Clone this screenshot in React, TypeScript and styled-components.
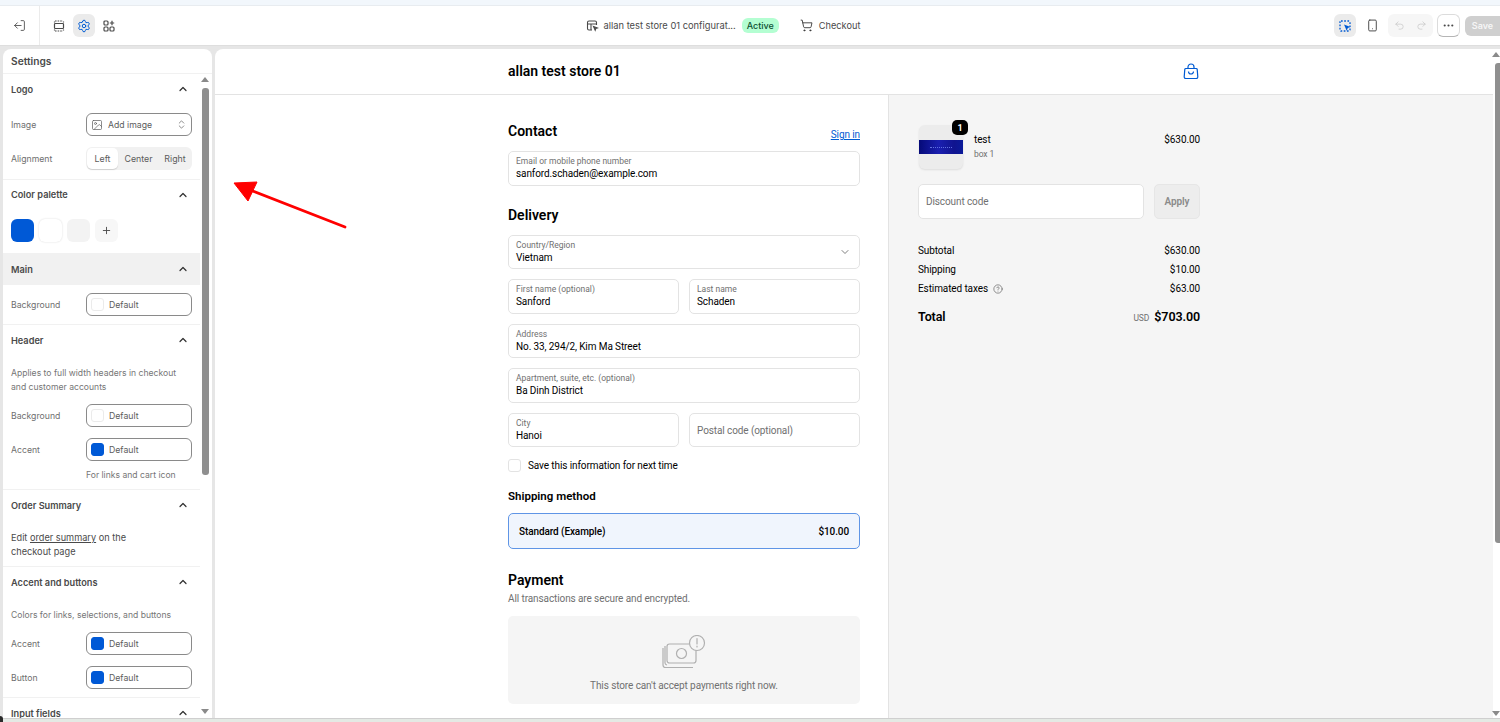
import React from 'react';
import styled, { createGlobalStyle } from 'styled-components';
import {
  ChevronDown,
  ChevronUp,
  ChevronsUpDown,
  CircleHelp,
  Ellipsis,
  ImageIcon,
  LogOut,
  Plus,
  Redo2,
  Settings,
  ShoppingCart,
  Smartphone,
  Undo2,
} from 'lucide-react';

const GlobalStyle = createGlobalStyle`
  html, body {
    margin: 0;
    padding: 0;
    height: 722px;
    overflow: hidden;
    background: #e6e6e6;
    font-family: Inter, "Liberation Sans", sans-serif;
  }
  * { box-sizing: border-box; }
`;

const Page = styled.div`
  position: relative;
  width: 1500px;
  height: 722px;
  display: flex;
  flex-direction: column;
  overflow: hidden;
`;

const TopStrip = styled.div`
  height: 6px;
  flex: none;
  background: #f2f7fc;
  border-bottom: 1px solid #e8ecf0;
`;

const TopBar = styled.header`
  height: 39px;
  flex: none;
  background: #fff;
  display: flex;
  align-items: center;
  justify-content: space-between;
`;

const BarGroup = styled.div`
  display: flex;
  align-items: center;
  height: 100%;
`;

const ExitCell = styled.div`
  width: 40px;
  height: 100%;
  padding-right: 1px;
  display: flex;
  align-items: center;
  justify-content: center;
  border-right: 1px solid #ebebeb;
  color: #4a4a4a;
`;

const NavIcons = styled.div`
  display: flex;
  align-items: center;
  gap: 3px;
  padding-left: 8px;
  margin-right: -8px;
`;

const IconButton = styled.div<{ $active?: boolean; $accent?: boolean; $gap?: number }>`
  width: 22px;
  height: 23px;
  margin-left: ${(p) => p.$gap ?? 0}px;
  border-radius: 6px;
  display: flex;
  align-items: center;
  justify-content: center;
  color: ${(p) => (p.$accent ? '#005bd3' : '#4a4a4a')};
  background: ${(p) => (p.$active ? '#ebebeb' : 'transparent')};
`;

const ConfigName = styled.span`
  margin-left: 5px;
  font-size: 9.3px;
  color: #4a4a4a;
`;

const ActivePill = styled.span`
  margin-left: 6px;
  height: 15px;
  padding: 0 5px;
  border-radius: 6px;
  display: flex;
  align-items: center;
  background: #b4fed2;
  color: #0c5132;
  font-size: 9px;
  font-weight: 500;
`;

const CheckoutLabel = styled.span`
  margin-left: 6px;
  font-size: 9.2px;
  color: #4a4a4a;
`;

const CartWrap = styled.span`
  margin-left: 21px;
  display: flex;
  color: #303030;
`;

const UndoGroup = styled.div`
  margin-left: 5px;
  width: 45px;
  height: 23px;
  border-radius: 6px;
  background: #f6f6f6;
  display: flex;
  align-items: center;
  justify-content: space-around;
  color: #c4c4c4;
`;

const MoreButton = styled.div`
  margin-left: 4px;
  width: 23px;
  height: 23px;
  border-radius: 6px;
  background: #fff;
  border: 1px solid #dcdcdc;
  border-bottom-color: #b5b5b5;
  display: flex;
  align-items: center;
  justify-content: center;
  color: #4a4a4a;
`;

const SaveButton = styled.div`
  margin-left: 5px;
  width: 35px;
  height: 20px;
  border-radius: 6px 0 0 6px;
  background: #cfcfcf;
  color: #f6f6f6;
  font-size: 9px;
  font-weight: 600;
  display: flex;
  align-items: center;
  justify-content: center;
`;

const Workspace = styled.div`
  flex: 1;
  min-height: 0;
  display: flex;
  gap: 3px;
  padding: 3px 0 0 3px;
  background: #e6e6e6;
  border-top: 1px solid #dedede;
`;

const BottomStrip = styled.div`
  height: 4px;
  flex: none;
  background: #e4e9e4;
  border-top: 1px solid #cfcfcf;
`;

const SidePanel = styled.aside`
  width: 209px;
  flex: none;
  background: #fff;
  border-radius: 8px 8px 0 0;
  display: flex;
  flex-direction: column;
  overflow: hidden;
`;

const SideTitle = styled.div`
  height: 25px;
  flex: none;
  padding-left: 8px;
  display: flex;
  align-items: center;
  border-bottom: 1px solid #f1f1f1;
  font-size: 10.2px;
  font-weight: 600;
  color: #4a4a4a;
`;

const SideBody = styled.div`
  flex: 1;
  min-height: 0;
  display: flex;
  overflow: hidden;
`;

const SideSections = styled.div`
  width: 197px;
  flex: none;
`;

const ScrollTrack = styled.div`
  flex: 1;
  padding: 3px 3px 4px 0;
  display: flex;
  flex-direction: column;
  align-items: flex-end;
`;

const ScrollArrow = styled.div<{ $down?: boolean }>`
  width: 0;
  height: 0;
  flex: none;
  border-left: 4px solid transparent;
  border-right: 4px solid transparent;
  ${(p) => (p.$down ? 'border-top: 5px solid #8a8a8a;' : 'border-bottom: 5px solid #8a8a8a;')}
`;

const ScrollThumb = styled.div`
  width: 7px;
  height: 387px;
  margin: 6px 0 auto;
  border-radius: 3px;
  background: #8f8f8f;
`;

const Section = styled.section`
  border-bottom: 1px solid #f1f1f1;
`;

const SectionHead = styled.div<{ $hot?: boolean; $height?: number }>`
  height: ${(p) => p.$height ?? (p.$hot ? 32 : 30)}px;
  padding: 0 11px 0 8px;
  display: flex;
  align-items: center;
  justify-content: space-between;
  background: ${(p) => (p.$hot ? '#f1f1f1' : 'transparent')};
  font-size: 9.2px;
  font-weight: 600;
  color: #4a4a4a;
`;

const SectionBody = styled.div<{ $top?: number; $bottom?: number }>`
  display: flex;
  flex-direction: column;
  gap: 11px;
  padding: ${(p) => p.$top ?? 10}px 8px ${(p) => p.$bottom ?? 8}px;
`;

const Row = styled.div`
  display: grid;
  grid-template-columns: 75px 1fr;
  align-items: center;
  height: 23px;
  font-size: 8.7px;
  color: #6f6f6f;
`;

const Control = styled.div`
  height: 23px;
  padding: 0 4px;
  display: flex;
  align-items: center;
  gap: 5px;
  border: 1px solid #8a8a8a;
  border-radius: 6px;
  background: #fff;
  font-size: 8.7px;
  color: #5c5c5c;
`;

const Swatch = styled.span<{ $color: string }>`
  width: 13px;
  height: 13px;
  border-radius: 3px;
  background: ${(p) => p.$color};
  border: 1px solid ${(p) => (p.$color === '#fff' ? '#ebebeb' : p.$color)};
`;

const ControlText = styled.span`
  flex: 1;
`;

const Segments = styled.div`
  height: 23px;
  padding: 1px;
  display: grid;
  grid-template-columns: 31px 1fr 32px;
  border-radius: 6px;
  background: #f1f1f1;
`;

const Segment = styled.span<{ $on?: boolean }>`
  display: flex;
  align-items: center;
  justify-content: center;
  border-radius: 5px;
  font-size: 8.8px;
  color: #5c5c5c;
  background: ${(p) => (p.$on ? '#fff' : 'transparent')};
  box-shadow: ${(p) => (p.$on ? '0 1px 1px #cfcfcf' : 'none')};
`;

const Palette = styled.div`
  display: flex;
  gap: 5px;
  height: 23px;
`;

const PaletteChip = styled.span<{ $color: string }>`
  width: 23px;
  height: 23px;
  border-radius: 6px;
  display: flex;
  align-items: center;
  justify-content: center;
  color: #4a4a4a;
  background: ${(p) => p.$color};
  box-shadow: ${(p) => (p.$color === '#fff' ? '0 0 2px #d8d8d8' : 'none')};
`;

const Note = styled.p`
  margin: 1px 0 -1px;
  font-size: 8.6px;
  line-height: 14px;
  color: #767676;
`;

const DarkNote = styled(Note)`
  width: 135px;
  font-size: 9.2px;
  color: #4a4a4a;
  u { text-underline-offset: 1px; }
`;

const Hint = styled(Note)`
  margin: -4px 0 -1px 75px;
`;

const Preview = styled.main`
  flex: 1;
  min-width: 0;
  display: flex;
  background: #fff;
  border-radius: 8px 0 0 0;
  overflow: hidden;
`;

const PreviewInner = styled.div`
  flex: 1;
  min-width: 0;
  display: flex;
  flex-direction: column;
  font-family: Roboto, "Noto Sans", sans-serif;
  letter-spacing: -0.1px;
`;

const PreviewScroll = styled.div`
  width: 7px;
  flex: none;
  padding: 3px 0 2px 0;
  display: flex;
  flex-direction: column;
  align-items: flex-end;
  background: #fff;
`;

const PreviewThumb = styled.div`
  width: 5px;
  height: 480px;
  margin: 6px 0 auto;
  border-radius: 3px 0 0 3px;
  background: #8f8f8f;
`;

const StoreHeader = styled.div`
  height: 46px;
  flex: none;
  padding-bottom: 1px;
  display: grid;
  grid-template-columns: 293px 692px;
  align-items: center;
  border-bottom: 1px solid #e3e3e3;
`;

const StoreInner = styled.div`
  grid-column: 2;
  display: flex;
  align-items: center;
  justify-content: space-between;
  padding-right: 1px;
  color: #005bd3;
`;

const StoreName = styled.span`
  font-size: 14px;
  font-weight: 600;
  letter-spacing: 0;
  color: #000;
`;

const CheckoutGrid = styled.div`
  flex: 1;
  min-height: 0;
  display: grid;
  grid-template-columns: 674px 1fr;
`;

const FormColumn = styled.div`
  display: flex;
  justify-content: flex-end;
  padding: 27px 28px 0 0;
  border-right: 1px solid #e3e3e3;
  overflow: hidden;
`;

const Form = styled.div`
  width: 352px;
`;

const Heading = styled.h2<{ $mt?: number }>`
  margin: ${(p) => p.$mt ?? 0}px 0 0;
  font-size: 14px;
  line-height: 18px;
  font-weight: 600;
  letter-spacing: 0;
  color: #000;
`;

const HeadingRow = styled.div`
  display: flex;
  justify-content: space-between;
  align-items: flex-end;
`;

const SignIn = styled.a`
  font-size: 10px;
  color: #005bd3;
  text-decoration: underline;
`;

const Fields = styled.div`
  display: flex;
  flex-direction: column;
  gap: 10px;
  margin-top: 11px;
`;

const FieldPair = styled.div`
  display: grid;
  grid-template-columns: 1fr 1fr;
  gap: 10px;
`;

const Field = styled.div`
  position: relative;
  height: 34.5px;
  padding: 0 7px;
  display: flex;
  flex-direction: column;
  justify-content: center;
  border: 1px solid #e3e3e3;
  border-radius: 5px;
  background: #fff;
`;

const FieldLabel = styled.span`
  font-size: 8.5px;
  line-height: 11px;
  letter-spacing: 0;
  color: #707070;
`;

const FieldValue = styled.span`
  padding-top: 1px;
  font-size: 10px;
  line-height: 12px;
  color: #000;
`;

const Placeholder = styled.span`
  padding-top: 2px;
  font-size: 10px;
  color: #707070;
`;

const SelectChevron = styled.span`
  position: absolute;
  right: 8px;
  top: 10px;
  display: flex;
  color: #707070;
`;

const SaveRow = styled.label`
  margin-top: 12px;
  display: flex;
  align-items: center;
  gap: 7px;
  font-size: 10px;
  color: #000;
`;

const CheckBox = styled.span`
  width: 13px;
  height: 13px;
  border: 1px solid #e3e3e3;
  border-radius: 3px;
`;

const SubHeading = styled.h3`
  margin: 17px 0 0;
  font-size: 11.5px;
  line-height: 15px;
  font-weight: 600;
  letter-spacing: 0;
  color: #000;
`;

const ShippingOption = styled.div`
  margin-top: 9px;
  height: 36px;
  padding: 0 10px;
  display: flex;
  align-items: center;
  justify-content: space-between;
  border: 1.5px solid #5f95e6;
  border-radius: 5px;
  background: #f0f5fd;
  font-size: 10px;
  font-weight: 500;
  color: #000;
`;

const Muted = styled.p`
  margin: 3px 0 0;
  font-size: 10px;
  line-height: 14px;
  color: #707070;
`;

const PaymentBox = styled.div`
  margin-top: 10px;
  height: 88px;
  border-radius: 5px;
  background: #f5f5f5;
  display: flex;
  flex-direction: column;
  align-items: center;
  padding-top: 19px;
  gap: 11px;
  font-size: 10px;
  color: #707070;
`;

const SummaryColumn = styled.div`
  background: #f5f5f5;
  padding: 26px 0 0 29px;
`;

const Summary = styled.div`
  width: 282px;
`;

const LineItem = styled.div`
  display: flex;
  align-items: flex-start;
`;

const Thumb = styled.div`
  position: relative;
  width: 44px;
  height: 44px;
  margin: 4px 11px 0 1px;
  flex: none;
  display: flex;
  align-items: center;
  border-radius: 6px;
  background: #ececec;
  box-shadow: 0 1px 2px #dcdcdc;
`;

const ThumbBand = styled.div`
  width: 100%;
  height: 14px;
  display: flex;
  align-items: center;
  justify-content: center;
  background: linear-gradient(90deg, #050a78 0%, #1a1fb0 45%, #10148f 80%, #0a1a9a 100%);
`;

const ThumbDots = styled.span`
  width: 22px;
  border-top: 1px dotted #5f6fe0;
`;

const Badge = styled.span`
  position: absolute;
  top: -5px;
  right: -5px;
  width: 16px;
  height: 15px;
  border-radius: 5px;
  display: flex;
  align-items: center;
  justify-content: center;
  background: #000;
  color: #fff;
  font-size: 9px;
  font-weight: 700;
`;

const ItemText = styled.div`
  flex: 1;
  padding-top: 12px;
  font-size: 10px;
  line-height: 14px;
  color: #000;
`;

const ItemSub = styled.div`
  font-size: 8.5px;
  color: #707070;
`;

const ItemPrice = styled.div`
  padding-top: 12px;
  font-size: 10px;
  line-height: 14px;
  color: #000;
`;

const DiscountRow = styled.div`
  margin-top: 15px;
  display: flex;
  gap: 10px;
`;

const DiscountInput = styled.div`
  flex: 1;
  height: 34.5px;
  padding: 0 7px;
  display: flex;
  align-items: center;
  border: 1px solid #e3e3e3;
  border-radius: 5px;
  background: #fff;
  font-size: 10px;
  color: #707070;
`;

const ApplyButton = styled.div`
  width: 46px;
  height: 34.5px;
  display: flex;
  align-items: center;
  justify-content: center;
  border: 1px solid #e6e6e6;
  border-radius: 5px;
  background: #ededed;
  font-size: 10px;
  font-weight: 600;
  color: #8a8a8a;
`;

const Totals = styled.div`
  margin-top: 25px;
  display: flex;
  flex-direction: column;
  gap: 5px;
`;

const TotalRow = styled.div`
  display: flex;
  justify-content: space-between;
  align-items: center;
  height: 14px;
  font-size: 10px;
  color: #000;
`;

const TaxLabel = styled.span`
  display: flex;
  align-items: center;
  gap: 5px;
`;

const GrandRow = styled.div`
  margin-top: 13px;
  display: flex;
  justify-content: space-between;
  align-items: center;
  font-size: 12.5px;
  font-weight: 600;
  color: #000;
`;

const GrandAmount = styled.span`
  display: flex;
  align-items: baseline;
  gap: 5px;
  font-size: 12.5px;
`;

const Currency = styled.span`
  font-size: 8.5px;
  font-weight: 400;
  color: #707070;
`;

const ArrowOverlay = styled.svg`
  position: absolute;
  left: 225px;
  top: 170px;
  pointer-events: none;
`;

const DarkCorner = styled.div`
  position: absolute;
  left: 0;
  bottom: 0;
  width: 3px;
  height: 6px;
  background: #2a2a2a;
  border-top-right-radius: 3px;
`;

const BLUE = '#0059d6';

const ColorRow = ({ label, color }: { label: string; color: string }) => (
  <Row>
    {label}
    <Control>
      <Swatch $color={color} />
      Default
    </Control>
  </Row>
);

const Head = ({ title, hot, height }: { title: string; hot?: boolean; height?: number }) => (
  <SectionHead $hot={hot} $height={height}>
    {title}
    <ChevronUp size={12} strokeWidth={2.4} color="#303030" />
  </SectionHead>
);

const SectionsIcon = () => (
  <svg width="14" height="14" viewBox="0 0 14 14" fill="none" stroke="currentColor" strokeWidth="1.2">
    <rect x="2.5" y="4.5" width="9" height="5" rx="0.8" />
    <path d="M3 2h8M3 12h8" strokeDasharray="1.6 1" />
    <path d="M2.5 3.5V2.6M11.5 3.5V2.6M2.5 11.4v-1M11.5 11.4v-1" />
  </svg>
);

const AppsIcon = () => (
  <svg width="14" height="14" viewBox="0 0 14 14" fill="none" stroke="currentColor" strokeWidth="1.2">
    <rect x="2" y="2" width="4" height="4" rx="1" />
    <rect x="2" y="8" width="4" height="4" rx="1" />
    <rect x="8" y="8" width="4" height="4" rx="1" />
    <path d="M10 1.8v4.4M7.8 4h4.4" />
  </svg>
);

const LayoutFileIcon = () => (
  <svg width="13" height="13" viewBox="0 0 13 13" fill="none" stroke="#4a4a4a" strokeWidth="1.1">
    <path d="M6 11H3a1.5 1.5 0 0 1-1.5-1.5v-6A1.5 1.5 0 0 1 3 2h6a1.5 1.5 0 0 1 1.5 1.5V6" />
    <path d="M1.5 5h9M5 5v6" />
    <path d="M7.5 7.5l4 1.5-1.7.6-.6 1.7z" fill="#4a4a4a" />
  </svg>
);

const SelectIcon = () => (
  <svg width="14" height="14" viewBox="0 0 14 14" fill="none">
    <rect x="2" y="2" width="10" height="10" rx="1" stroke="#005bd3" strokeWidth="1.3" strokeDasharray="1.7 1.5" />
    <path d="M6 5.5l6.5 2.5-2.7 1.1-1.1 2.7z" fill="#005bd3" />
  </svg>
);

const BagIcon = () => (
  <svg width="16" height="17" viewBox="0 0 16 17" fill="none" stroke="currentColor" strokeWidth="1.2">
    <path d="M2.8 5.5h10.4a1 1 0 0 1 1 .9l.6 7.5a1.5 1.5 0 0 1-1.5 1.6H2.7a1.5 1.5 0 0 1-1.5-1.6l.6-7.5a1 1 0 0 1 1-.9z" />
    <path d="M5 5.5V4a3 3 0 0 1 6 0v1.5" />
    <path d="M5.5 8.5a2.5 2.5 0 0 0 5 0" />
  </svg>
);

const NoPaymentIcon = () => (
  <svg width="46" height="34" viewBox="0 0 46 34" fill="none" stroke="#b0b0b0" strokeWidth="1.2">
    <rect x="6" y="9" width="29" height="19" rx="2.5" />
    <path d="M2 13v17a2.5 2.5 0 0 0 2.5 2.5H32" />
    <path d="M4 11v17a2.5 2.5 0 0 0 2 2" />
    <circle cx="20.5" cy="18.5" r="5" />
    <circle cx="36" cy="8" r="7.5" fill="#f5f5f5" />
    <path d="M36 3.5v5.5M36 11v1" strokeLinecap="round" />
  </svg>
);

const App = () => (
  <Page>
    <GlobalStyle />
    <TopStrip />
    <TopBar>
      <BarGroup>
        <ExitCell>
          <LogOut size={13} strokeWidth={1.6} style={{ transform: 'scaleX(-1)' }} />
        </ExitCell>
        <NavIcons>
          <IconButton><SectionsIcon /></IconButton>
          <IconButton $active $accent><Settings size={14} strokeWidth={1.7} /></IconButton>
          <IconButton><AppsIcon /></IconButton>
        </NavIcons>
      </BarGroup>
      <BarGroup>
        <LayoutFileIcon />
        <ConfigName>allan test store 01 configurat...</ConfigName>
        <ActivePill>Active</ActivePill>
        <CartWrap><ShoppingCart size={13} strokeWidth={1.6} /></CartWrap>
        <CheckoutLabel>Checkout</CheckoutLabel>
      </BarGroup>
      <BarGroup>
        <IconButton $active><SelectIcon /></IconButton>
        <IconButton $gap={5}><Smartphone size={13} strokeWidth={1.8} /></IconButton>
        <UndoGroup>
          <Undo2 size={11} strokeWidth={1.5} />
          <Redo2 size={11} strokeWidth={1.5} />
        </UndoGroup>
        <MoreButton><Ellipsis size={13} strokeWidth={2} /></MoreButton>
        <SaveButton>Save</SaveButton>
      </BarGroup>
    </TopBar>

    <Workspace>
      <SidePanel>
        <SideTitle>Settings</SideTitle>
        <SideBody>
          <SideSections>
            <Section>
              <Head title="Logo" />
              <SectionBody $top={9} $bottom={9}>
                <Row>
                  Image
                  <Control>
                    <ImageIcon size={12} strokeWidth={1.4} color="#5c5c5c" />
                    <ControlText>Add image</ControlText>
                    <ChevronsUpDown size={11} strokeWidth={1.5} color="#5c5c5c" />
                  </Control>
                </Row>
                <Row>
                  Alignment
                  <Segments>
                    <Segment $on>Left</Segment>
                    <Segment>Center</Segment>
                    <Segment>Right</Segment>
                  </Segments>
                </Row>
              </SectionBody>
            </Section>
            <div>
              <Head title="Color palette" height={29} />
              <SectionBody $top={10} $bottom={11}>
                <Palette>
                  <PaletteChip $color={BLUE} />
                  <PaletteChip $color="#fff" />
                  <PaletteChip $color="#f3f3f3" />
                  <PaletteChip $color="#f7f7f7"><Plus size={11} strokeWidth={2} /></PaletteChip>
                </Palette>
              </SectionBody>
            </div>
            <Section>
              <Head title="Main" hot />
              <SectionBody $top={8} $bottom={8}>
                <ColorRow label="Background" color="#fff" />
              </SectionBody>
            </Section>
            <Section>
              <Head title="Header" />
              <SectionBody>
                <Note>Applies to full width headers in checkout and customer accounts</Note>
                <ColorRow label="Background" color="#fff" />
                <ColorRow label="Accent" color={BLUE} />
                <Hint>For links and cart icon</Hint>
              </SectionBody>
            </Section>
            <Section>
              <Head title="Order Summary" />
              <SectionBody>
                <DarkNote>Edit <u>order summary</u> on the checkout page</DarkNote>
              </SectionBody>
            </Section>
            <Section>
              <Head title="Accent and buttons" />
              <SectionBody>
                <Note>Colors for links, selections, and buttons</Note>
                <ColorRow label="Accent" color={BLUE} />
                <ColorRow label="Button" color={BLUE} />
              </SectionBody>
            </Section>
            <Head title="Input fields" />
          </SideSections>
          <ScrollTrack>
            <ScrollArrow />
            <ScrollThumb />
            <ScrollArrow $down />
          </ScrollTrack>
        </SideBody>
      </SidePanel>

      <Preview>
        <PreviewInner>
          <StoreHeader>
            <StoreInner>
              <StoreName>allan test store 01</StoreName>
              <BagIcon />
            </StoreInner>
          </StoreHeader>
          <CheckoutGrid>
            <FormColumn>
              <Form>
                <HeadingRow>
                  <Heading>Contact</Heading>
                  <SignIn>Sign in</SignIn>
                </HeadingRow>
                <Fields>
                  <Field>
                    <FieldLabel>Email or mobile phone number</FieldLabel>
                    <FieldValue>sanford.schaden@example.com</FieldValue>
                  </Field>
                </Fields>
                <Heading $mt={20}>Delivery</Heading>
                <Fields>
                  <Field>
                    <FieldLabel>Country/Region</FieldLabel>
                    <FieldValue>Vietnam</FieldValue>
                    <SelectChevron><ChevronDown size={12} strokeWidth={1.8} /></SelectChevron>
                  </Field>
                  <FieldPair>
                    <Field>
                      <FieldLabel>First name (optional)</FieldLabel>
                      <FieldValue>Sanford</FieldValue>
                    </Field>
                    <Field>
                      <FieldLabel>Last name</FieldLabel>
                      <FieldValue>Schaden</FieldValue>
                    </Field>
                  </FieldPair>
                  <Field>
                    <FieldLabel>Address</FieldLabel>
                    <FieldValue>No. 33, 294/2, Kim Ma Street</FieldValue>
                  </Field>
                  <Field>
                    <FieldLabel>Apartment, suite, etc. (optional)</FieldLabel>
                    <FieldValue>Ba Dinh District</FieldValue>
                  </Field>
                  <FieldPair>
                    <Field>
                      <FieldLabel>City</FieldLabel>
                      <FieldValue>Hanoi</FieldValue>
                    </Field>
                    <Field>
                      <Placeholder>Postal code (optional)</Placeholder>
                    </Field>
                  </FieldPair>
                </Fields>
                <SaveRow>
                  <CheckBox />
                  Save this information for next time
                </SaveRow>
                <SubHeading>Shipping method</SubHeading>
                <ShippingOption>
                  <span>Standard (Example)</span>
                  <span>$10.00</span>
                </ShippingOption>
                <Heading $mt={22}>Payment</Heading>
                <Muted>All transactions are secure and encrypted.</Muted>
                <PaymentBox>
                  <NoPaymentIcon />
                  This store can't accept payments right now.
                </PaymentBox>
              </Form>
            </FormColumn>
            <SummaryColumn>
              <Summary>
                <LineItem>
                  <Thumb>
                    <ThumbBand><ThumbDots /></ThumbBand>
                    <Badge>1</Badge>
                  </Thumb>
                  <ItemText>
                    test
                    <ItemSub>box 1</ItemSub>
                  </ItemText>
                  <ItemPrice>$630.00</ItemPrice>
                </LineItem>
                <DiscountRow>
                  <DiscountInput>Discount code</DiscountInput>
                  <ApplyButton>Apply</ApplyButton>
                </DiscountRow>
                <Totals>
                  <TotalRow><span>Subtotal</span><span>$630.00</span></TotalRow>
                  <TotalRow><span>Shipping</span><span>$10.00</span></TotalRow>
                  <TotalRow>
                    <TaxLabel>Estimated taxes <CircleHelp size={10} strokeWidth={1.5} color="#555" /></TaxLabel>
                    <span>$63.00</span>
                  </TotalRow>
                </Totals>
                <GrandRow>
                  <span>Total</span>
                  <GrandAmount><Currency>USD</Currency>$703.00</GrandAmount>
                </GrandRow>
              </Summary>
            </SummaryColumn>
          </CheckoutGrid>
        </PreviewInner>
        <PreviewScroll>
          <ScrollArrow />
          <PreviewThumb />
          <ScrollArrow $down />
        </PreviewScroll>
      </Preview>
    </Workspace>
    <BottomStrip />
    <DarkCorner />

    <ArrowOverlay width="130" height="70" viewBox="0 0 130 70">
      <path d="M120 57L25 20" stroke="#ff0000" strokeWidth="2.8" strokeLinecap="round" />
      <path d="M9 13L32 12L23 31Z" fill="#ff0000" stroke="#ff0000" strokeWidth="1" strokeLinejoin="round" />
    </ArrowOverlay>
  </Page>
);

export default App;
